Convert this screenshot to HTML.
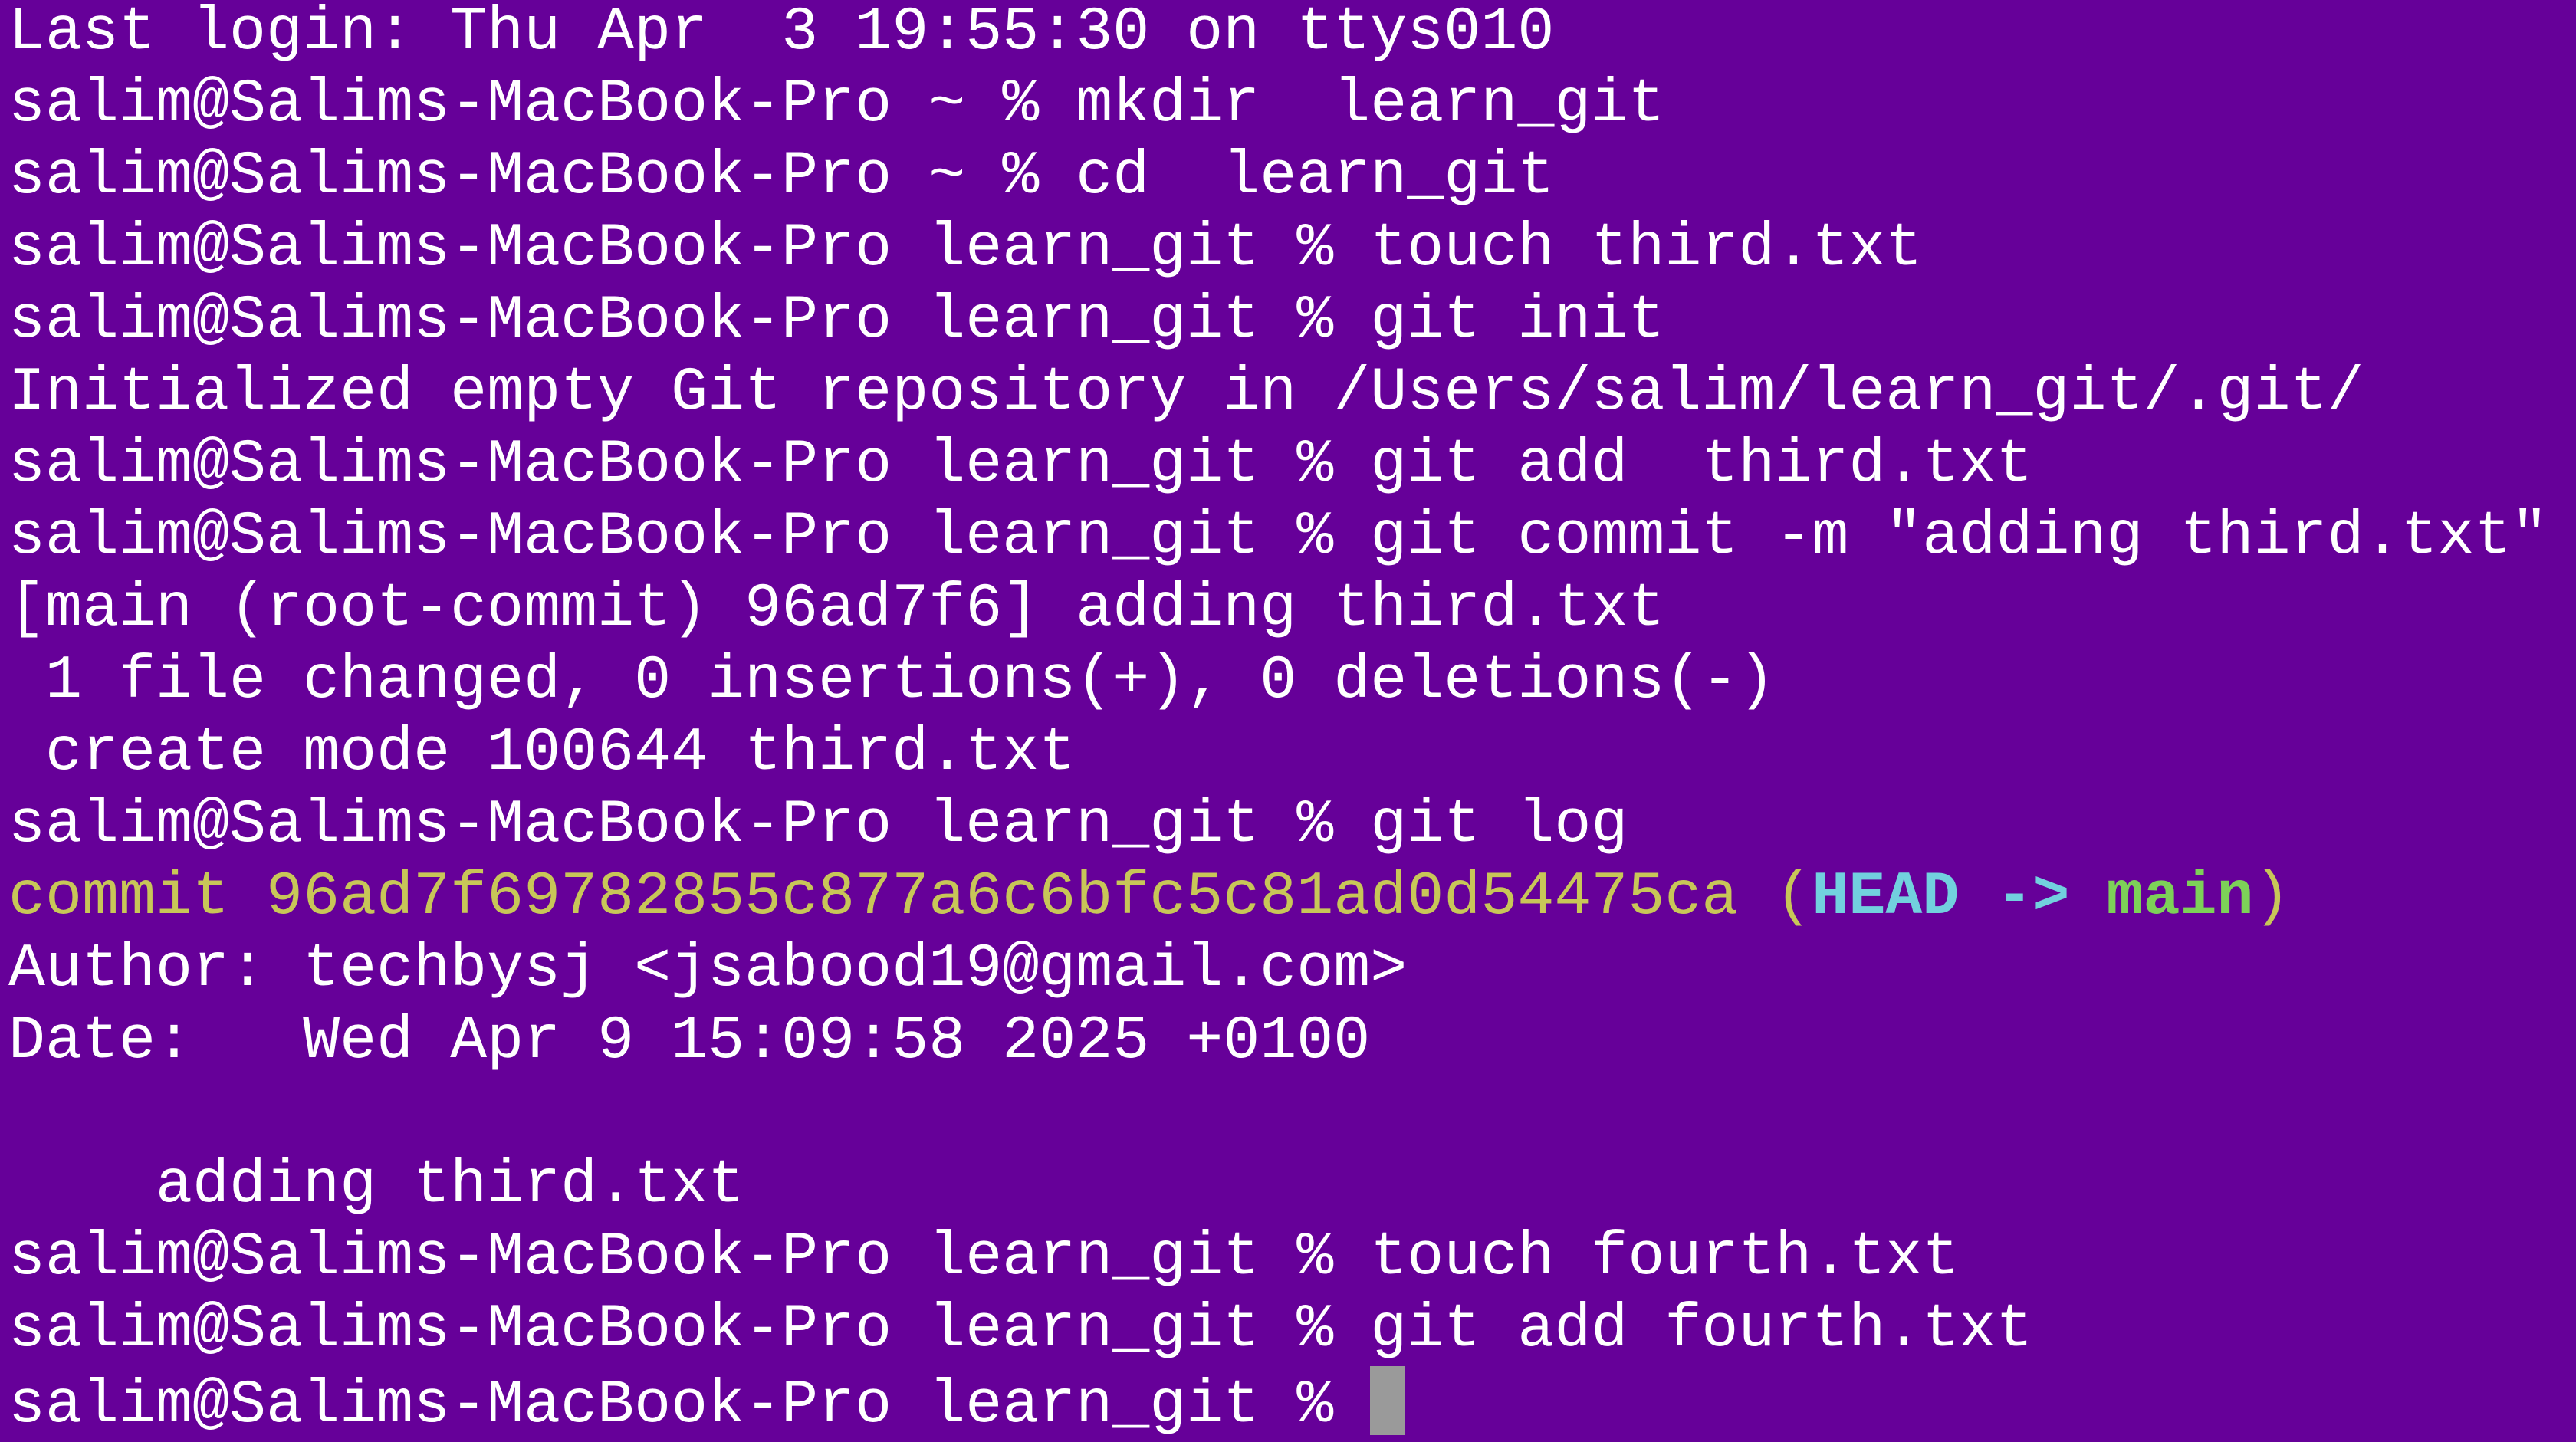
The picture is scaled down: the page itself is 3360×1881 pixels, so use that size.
<!DOCTYPE html>
<html><head><meta charset="utf-8"><style>
html,body{margin:0;padding:0;background:#660099;width:3360px;height:1878px;overflow:hidden}
pre{margin:0;position:absolute;left:11px;top:-4px;font-family:"Liberation Mono",monospace;font-size:80px;line-height:94px;color:#fff;letter-spacing:0}
.y{color:#c8c658}.c{color:#72d0de;font-weight:bold}.g{color:#7dd158;font-weight:bold}
.cur{display:inline-block;width:46px;height:90px;background:#9a9a9a;vertical-align:-18px}
</style></head><body><pre>Last login: Thu Apr  3 19:55:30 on ttys010
salim@Salims-MacBook-Pro ~ % mkdir  learn_git
salim@Salims-MacBook-Pro ~ % cd  learn_git
salim@Salims-MacBook-Pro learn_git % touch third.txt
salim@Salims-MacBook-Pro learn_git % git init
Initialized empty Git repository in /Users/salim/learn_git/.git/
salim@Salims-MacBook-Pro learn_git % git add  third.txt
salim@Salims-MacBook-Pro learn_git % git commit -m "adding third.txt"
[main (root-commit) 96ad7f6] adding third.txt
 1 file changed, 0 insertions(+), 0 deletions(-)
 create mode 100644 third.txt
salim@Salims-MacBook-Pro learn_git % git log
<span class="y">commit 96ad7f69782855c877a6c6bfc5c81ad0d54475ca (</span><span class="c">HEAD -&gt; </span><span class="g">main</span><span class="y">)</span>
Author: techbysj &lt;jsabood19@gmail.com&gt;
Date:   Wed Apr 9 15:09:58 2025 +0100

    adding third.txt
salim@Salims-MacBook-Pro learn_git % touch fourth.txt
salim@Salims-MacBook-Pro learn_git % git add fourth.txt
salim@Salims-MacBook-Pro learn_git % <span class="cur"></span></pre></body></html>
